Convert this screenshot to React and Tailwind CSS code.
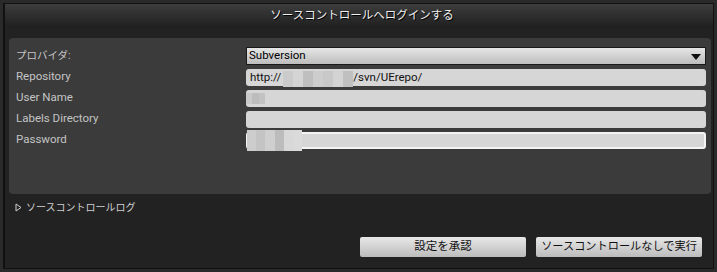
import React from "react";

const font = { fontFamily: "Roboto, 'Noto Sans CJK JP', sans-serif" };

function Blur({ className, cells }) {
  return (
    <div className={"absolute flex " + className}>
      {cells.map((c, i) => (
        <div key={i} className="h-full flex-1" style={{ background: c }} />
      ))}
    </div>
  );
}

function Label({ children, jp }) {
  return (
    <div className={"h-[21px] flex items-center text-[#c4c4c4] pl-[7px] " + (jp ? "text-[10.5px]" : "text-[11.5px]")}>
      {children}
    </div>
  );
}

export default function App() {
  return (
    <div className="w-[717px] h-[272px] bg-[#2a2a2a] overflow-hidden" style={font}>
      <div className="ml-[3px] mt-[3px] w-[711px] h-[266px] bg-[#111] p-[1px] pl-[2px]">
        <div className="w-full h-full bg-[#222222] flex flex-col">
          <div className="h-[24px] shrink-0 flex items-center justify-center pl-[6px] text-[11.5px] text-[#f0f0f0] bg-gradient-to-b from-[#3d3d3d] to-[#1f1f1f] [text-shadow:1px_1px_0_#000]">
            ソースコントロールへログインする
          </div>
          <div className="mt-[10px] ml-[4px] mr-[2px] h-[156px] rounded-[4px] bg-[#3b3b3b] flex pt-[9px]">
            <div className="w-[237px] flex flex-col gap-0 mt-[-2px]">
              <Label jp>プロバイダ:</Label>
              <Label>Repository</Label>
              <Label>User Name</Label>
              <Label>Labels Directory</Label>
              <Label>Password</Label>
            </div>
            <div className="flex-1 mr-[5px] flex flex-col gap-[4px] pt-0">
              <div className="relative h-[18px] border border-[#1a1a1a] bg-gradient-to-b from-[#e6e6e6] to-[#bdbdbd] flex items-center pl-[2px] text-[11.5px] text-black">
                Subversion
                <svg className="absolute right-[4px] top-[6px]" width="10" height="6" viewBox="0 0 10 6">
                  <polygon points="0,0 10,0 5,6" fill="#111" />
                </svg>
              </div>
              <div className="relative h-[17px] rounded-[3px] bg-[#d6d6d6] flex items-center pl-[4px] text-[11.5px] text-[#111]">
                <span>http://</span>
                <span className="w-[72px]" />
                <span>/svn/UErepo/</span>
                <Blur className="left-[37px] top-[2px] w-[70px] h-[16px]" cells={["#cbcbcb", "#d4d4d4", "#bfbfbf", "#cdcdcd", "#c8c8c8", "#d3d3d3", "#c0c0c0"]} />
              </div>
              <div className="relative h-[17px] rounded-[3px] bg-[#d6d6d6]">
                <Blur className="left-[0px] top-[3px] w-[19px] h-[11px]" cells={["#c9c9c9", "#bcbcbc", "#c2c2c2"]} />
              </div>
              <div className="h-[17px] rounded-[3px] bg-[#d6d6d6]" />
              <div className="relative h-[17px] rounded-[3px] bg-[#d6d6d6] border-2 border-[#f4f4f4]">
                <Blur className="left-[-1px] top-[-4px] w-[55px] h-[21px]" cells={["#cdcdcd", "#c4c4c4", "#cfcfcf", "#bcbcbc", "#d8d8d8", "#dadada"]} />
              </div>
            </div>
          </div>
          <div className="mt-[6px] ml-[10px] flex items-center gap-[4px] text-[10px] text-[#d0d0d0]">
            <svg width="7" height="9" viewBox="0 0 7 9">
              <polygon points="1,1 6,4.5 1,8" fill="none" stroke="#cfcfcf" strokeWidth="1" />
            </svg>
            <span>ソースコントロールログ</span>
          </div>
          <div className="flex-1" />
          <div className="flex justify-end gap-[10px] mr-[11px] mb-[11px]">
            <button className="w-[166px] h-[20px] rounded-[2px] bg-gradient-to-b from-[#e8e8e8] to-[#bcbcbc] text-[11.5px] text-[#111] flex items-center justify-center whitespace-nowrap">
              設定を承認
            </button>
            <button className="w-[166px] h-[20px] rounded-[2px] bg-gradient-to-b from-[#e8e8e8] to-[#bcbcbc] text-[11.2px] text-[#111] flex items-center justify-center whitespace-nowrap">
              ソースコントロールなしで実行
            </button>
          </div>
        </div>
      </div>
    </div>
  );
}
